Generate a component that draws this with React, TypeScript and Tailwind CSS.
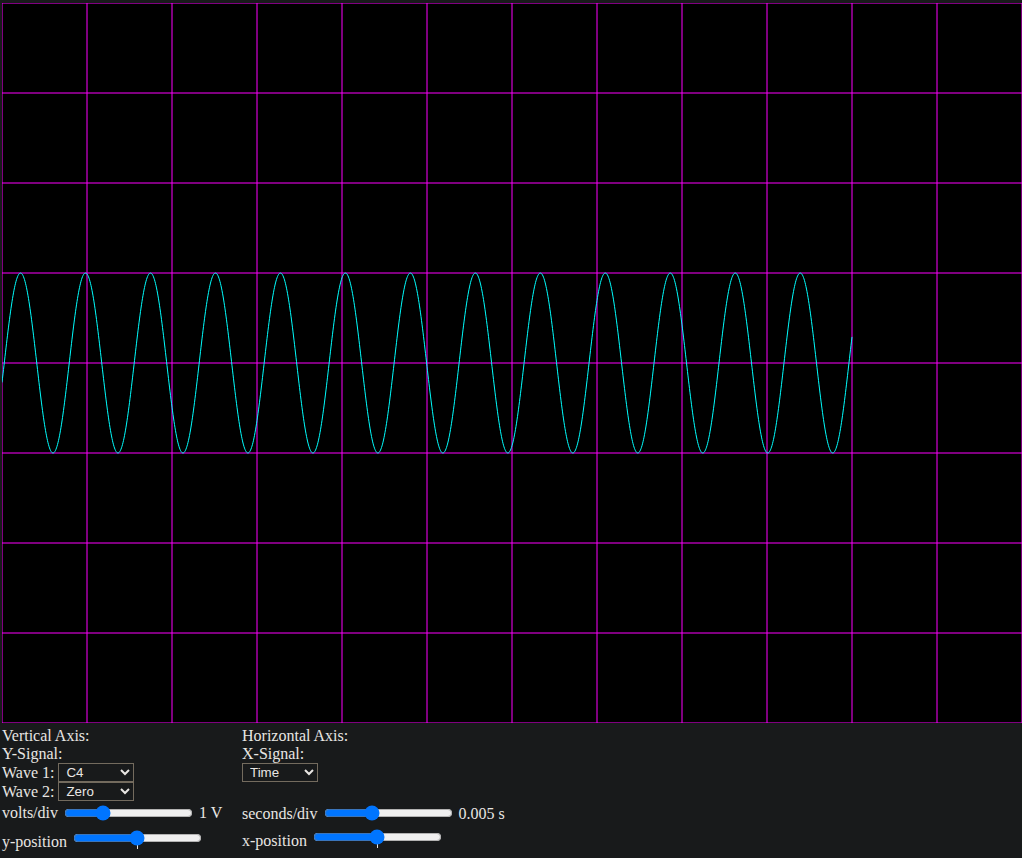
import React from "react"

const W = 1020
const H = 720
const DX = 85
const DY = 90

// C4 at 0.005 s/div, 85 px per div
const PERIOD = 17000 / 261.63

function wavePath() {
  const pts: string[] = []
  for (let x = 0; x <= 850; x += 0.5) {
    const y = 360 - 90 * Math.cos((2 * Math.PI * (x - 18.5)) / PERIOD)
    pts.push(`${x.toFixed(1)},${y.toFixed(2)}`)
  }
  return "M" + pts.join(" L")
}

function Scope() {
  const vert = Array.from({ length: W / DX + 1 }, (_, i) => i * DX)
  const horiz = Array.from({ length: H / DY + 1 }, (_, i) => i * DY)
  return (
    <svg width={W} height={H} viewBox={`0 0 ${W} ${H}`} className="block bg-black">
      {vert.map((x) => (
        <line key={"v" + x} x1={x} y1={0} x2={x} y2={H} stroke="#ff00ff" strokeWidth={1} />
      ))}
      {horiz.map((y) => (
        <line key={"h" + y} x1={0} y1={y} x2={W} y2={y} stroke="#ff00ff" strokeWidth={1} />
      ))}
      <path d={wavePath()} fill="none" stroke="#00ffff" strokeWidth={1} />
    </svg>
  )
}

function Select({ options }: { options: string[] }) {
  return (
    <select
      defaultValue={options[0]}
      className="h-[19px] w-[76px] border border-[#736b5e] bg-[#181a1b] pl-[3px] font-['Liberation_Sans',Arial,sans-serif] text-[13.33px] text-[#e8e6e3] [color-scheme:dark]"
    >
      {options.map((o) => (
        <option key={o}>{o}</option>
      ))}
    </select>
  )
}

function Slider({ value, ticks }: { value: number; ticks?: boolean }) {
  return (
    <input
      type="range"
      min={0}
      max={100}
      defaultValue={value}
      list={ticks ? "center-tick" : undefined}
      className="m-0 w-[129px]"
    />
  )
}

export default function App() {
  return (
    <div className="min-h-screen bg-[#181a1b] pl-[2px] pt-[3px] font-['Liberation_Serif','Times_New_Roman',serif] text-[16px] text-[#e8e6e3]">
      <Scope />
      <datalist id="center-tick">
        <option value="50" />
      </datalist>

      <div className="mt-[4px] flex">
        {/* Vertical */}
        <div className="w-[240px]">
          <div className="leading-[18px]">Vertical Axis:</div>
          <div className="leading-[18px]">Y-Signal:</div>
          <div className="flex h-[19px] items-center gap-[4px] leading-[18px]">
            Wave 1: <Select options={["C4", "Zero", "Sine"]} />
          </div>
          <div className="flex h-[19px] items-center gap-[4px] leading-[18px]">
            Wave 2: <Select options={["Zero", "C4", "Sine"]} />
          </div>
          <div className="flex h-[24px] items-center gap-[6px] leading-[18px]">
            <span>volts/div</span>
            <Slider value={27} />
            <span>1 V</span>
          </div>
          <div className="flex h-[33px] items-start gap-[6px] leading-[18px]">
            <span className="pt-[8px]">y-position</span>
            <div className="pt-[2px]">
              <Slider value={50} ticks />
            </div>
          </div>
        </div>

        {/* Horizontal */}
        <div>
          <div className="leading-[18px]">Horizontal Axis:</div>
          <div className="leading-[18px]">X-Signal:</div>
          <div className="flex h-[19px] items-center">
            <Select options={["Time", "Wave 1", "Wave 2"]} />
          </div>
          <div className="h-[19px]" />
          <div className="flex h-[24px] items-center gap-[6px] leading-[18px]">
            <span className="pt-[1px]">seconds/div</span>
            <Slider value={36} />
            <span className="pt-[1px]">0.005 s</span>
          </div>
          <div className="flex h-[33px] items-start gap-[6px] leading-[18px]">
            <span className="pt-[7px]">x-position</span>
            <div className="pt-[1px]">
              <Slider value={50} ticks />
            </div>
          </div>
        </div>
      </div>
    </div>
  )
}
